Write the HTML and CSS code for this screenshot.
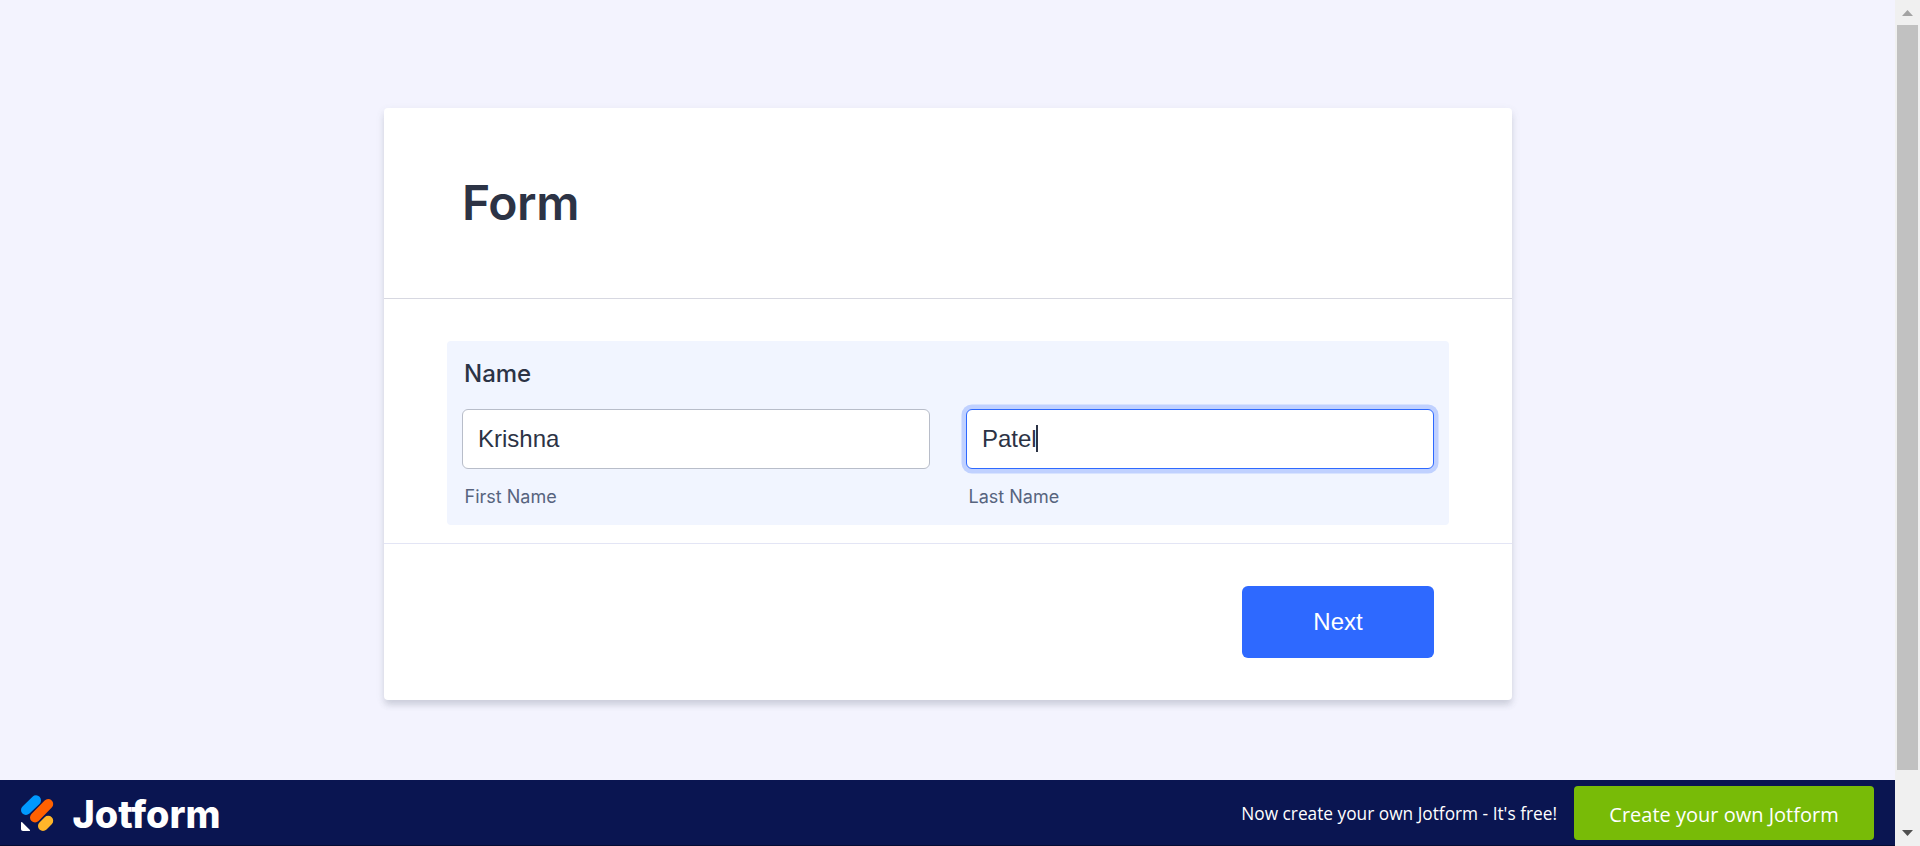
FILE: index.html
```html
<!DOCTYPE html>
<html lang="en">
<head>
<meta charset="utf-8">
<title>Form</title>
<link rel="stylesheet" href="styles.css">
</head>
<body>
<div class="window">
  <div class="page">
    <main class="stage">
      <form class="card">
        <header class="card-header"><h1 class="title">Form</h1></header>
        <section class="card-body">
          <div class="question">
            <div class="question-label">Name</div>
            <div class="fields">
              <div class="field">
                <div class="input">Krishna</div>
                <label class="sublabel">First Name</label>
              </div>
              <div class="field">
                <div class="input input-focus">Patel<span class="caret"></span></div>
                <label class="sublabel">Last Name</label>
              </div>
            </div>
          </div>
        </section>
        <footer class="card-footer"><button type="button" class="next">Next</button></footer>
      </form>
    </main>
    <footer class="brandbar">
      <svg class="logo" width="220" height="65" viewBox="0 0 220 65">
        <g fill="none" stroke-width="10" stroke-linecap="round">
          <path stroke="#0099ff" d="M26 30L36 20.300"/>
          <path stroke="#ff6100" d="M35 37.500L48.200 24"/>
          <path stroke="#ffb629" d="M43 46L48.200 40.800"/>
        </g>
        <path fill="#fff" d="M21 43c0-1 .7-1.200 1.400-.5l7.300 7.200c.7.700.4 1.300-.6 1.300H23c-1.200 0-2-.8-2-2z"/>
        <text class="wordmark" x="72.500" y="47.500" textLength="148" lengthAdjust="spacingAndGlyphs">Jotform</text>
      </svg>
      <div class="promo">
        <span class="promo-text">Now create your own Jotform - It's free!</span>
        <a class="promo-button">Create your own Jotform</a>
      </div>
    </footer>
  </div>
  <div class="scrollbar">
    <svg class="arrow" width="25" height="25" viewBox="0 0 25 25"><path fill="#a3a3a3" d="M7 16L12.500 10L18 16z"/></svg>
    <div class="thumb"></div>
    <svg class="arrow" width="25" height="25" viewBox="0 0 25 25"><path fill="#505050" d="M7 9L12.500 15L18 9z"/></svg>
  </div>
</div>
</body>
</html>
```
FILE: styles.css
```css
* { box-sizing: border-box; }
body { margin: 0; background: #f3f3fe; color: #2c3345; font-family: Inter, sans-serif; overflow: hidden; }
.window { display: flex; height: 846px; }
.page { flex: 1; display: flex; flex-direction: column; }
.stage { flex: 1; padding-top: 108px; }
.card { width: 1128px; height: 592px; margin: 0 auto; margin-left: 384px; display: flex; flex-direction: column; background: #fff; border-radius: 4px; box-shadow: 0 6px 6px -1px rgba(84, 95, 111, .16), 0 3px 9px rgba(84, 95, 111, .12); }
.card-header { height: 191px; padding: 65px 78px 0; border-bottom: 1px solid #d7d8e1; }
.title { margin: 0; font-size: 48px; font-weight: 600; line-height: 60px; letter-spacing: -.4px; }
.card-body { height: 245px; padding: 42px 63px 0; border-bottom: 1px solid #e3e5f5; }
.question { height: 184px; padding: 17px 15px 0; background: #f1f5ff; border-radius: 4px; }
.question-label { padding-left: 2px; font-size: 24px; font-weight: 450; line-height: 32px; margin-bottom: 19px; }
.fields { display: grid; grid-template-columns: 468px 468px; gap: 36px; }
.input { display: flex; align-items: center; height: 60px; padding: 0 15px; background: #fff; border: 1px solid #b8bdc9; border-radius: 6px; font: 24px/30px "Liberation Sans", sans-serif; }
.input-focus { border-color: #2e69ff; box-shadow: 0 0 0 4.500px rgba(46, 105, 255, .25); }
.caret { width: 2px; height: 27px; margin: -1px 0 0 -1px; background: #2c3345; }
.sublabel { display: block; margin-top: 16px; padding-left: 2.500px; font-size: 18px; line-height: 24px; color: #57647e; }
.card-footer { padding: 42px 78px 0; display: flex; justify-content: flex-end; }
.next { width: 192px; height: 72px; padding: 0; border: 0; border-radius: 6px; background: #2e69ff; color: #fff; font: 24px "Liberation Sans", sans-serif; }
.brandbar { height: 66px; display: flex; justify-content: space-between; background: #0a1551; border-bottom: 1px solid #060d33; }
.wordmark { fill: #fff; font: 800 38px Inter, sans-serif; }
.promo { display: flex; align-items: center; gap: 17px; padding-right: 21px; font-family: "Open Sans", sans-serif; color: #fff; white-space: nowrap; }
.promo-text { padding-top: 2px; font-size: 17.300px; }
.promo-button { width: 300px; height: 54px; margin-top: 1px; border-radius: 4px; background: #78bb07; font-size: 20px; line-height: 57px; text-align: center; }
.scrollbar { width: 25px; padding: 0 2px; display: flex; flex-direction: column; align-items: center; background: #f0f0f0; }
.arrow { display: block; flex: none; }
.thumb { width: 21px; height: 745px; margin-bottom: 51px; background: #c1c1c1; }
```
